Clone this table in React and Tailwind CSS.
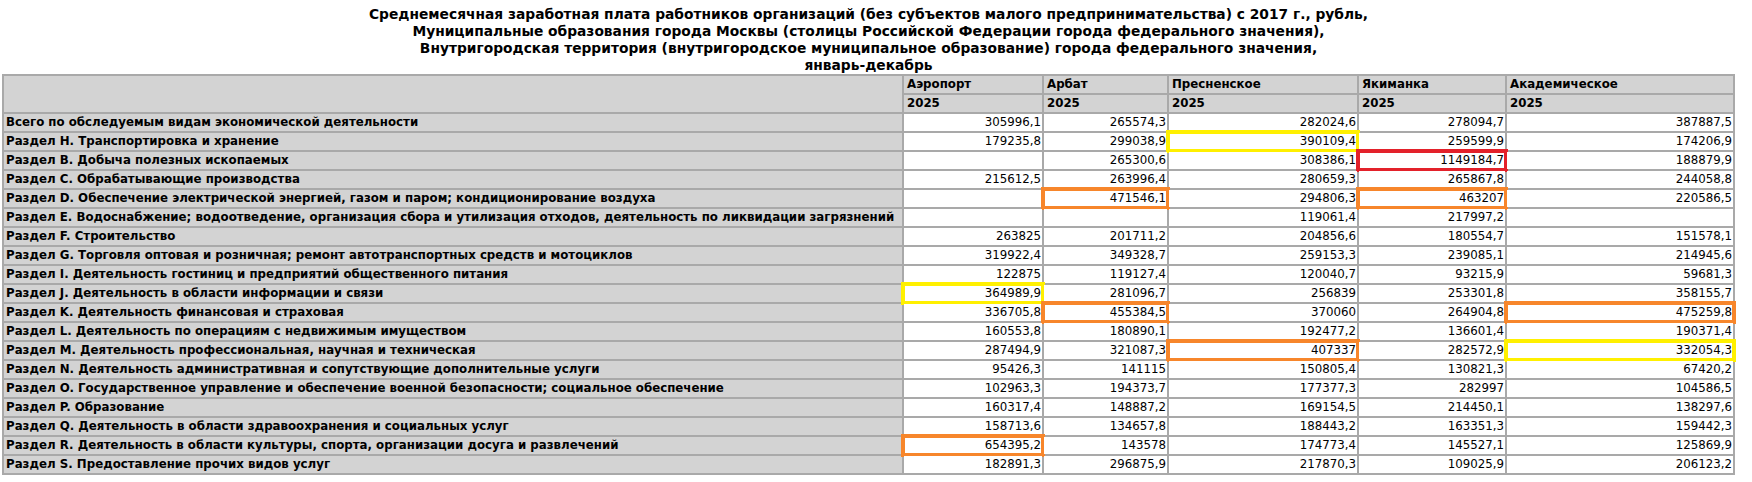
import React from "react";

const districts = ["Аэропорт", "Арбат", "Пресненское", "Якиманка", "Академическое"];

// marks: { columnIndex: colour }
const rows = [
  ["Всего по обследуемым видам экономической деятельности", ["305996,1", "265574,3", "282024,6", "278094,7", "387887,5"]],
  ["Раздел H. Транспортировка и хранение", ["179235,8", "299038,9", "390109,4", "259599,9", "174206,9"], { 2: "yellow" }],
  ["Раздел B. Добыча полезных ископаемых", ["", "265300,6", "308386,1", "1149184,7", "188879,9"], { 3: "red" }],
  ["Раздел C. Обрабатывающие производства", ["215612,5", "263996,4", "280659,3", "265867,8", "244058,8"]],
  ["Раздел D. Обеспечение электрической энергией, газом и паром; кондиционирование воздуха", ["", "471546,1", "294806,3", "463207", "220586,5"], { 1: "orange", 3: "orange" }],
  ["Раздел E. Водоснабжение; водоотведение, организация сбора и утилизация отходов, деятельность по ликвидации загрязнений", ["", "", "119061,4", "217997,2", ""]],
  ["Раздел F. Строительство", ["263825", "201711,2", "204856,6", "180554,7", "151578,1"]],
  ["Раздел G. Торговля оптовая и розничная; ремонт автотранспортных средств и мотоциклов", ["319922,4", "349328,7", "259153,3", "239085,1", "214945,6"]],
  ["Раздел I. Деятельность гостиниц и предприятий общественного питания", ["122875", "119127,4", "120040,7", "93215,9", "59681,3"]],
  ["Раздел J. Деятельность в области информации и связи", ["364989,9", "281096,7", "256839", "253301,8", "358155,7"], { 0: "yellow" }],
  ["Раздел K. Деятельность финансовая и страховая", ["336705,8", "455384,5", "370060", "264904,8", "475259,8"], { 1: "orange", 4: "orange" }],
  ["Раздел L. Деятельность по операциям с недвижимым имуществом", ["160553,8", "180890,1", "192477,2", "136601,4", "190371,4"]],
  ["Раздел M. Деятельность профессиональная, научная и техническая", ["287494,9", "321087,3", "407337", "282572,9", "332054,3"], { 2: "orange", 4: "yellow" }],
  ["Раздел N. Деятельность административная и сопутствующие дополнительные услуги", ["95426,3", "141115", "150805,4", "130821,3", "67420,2"]],
  ["Раздел O. Государственное управление и обеспечение военной безопасности; социальное обеспечение", ["102963,3", "194373,7", "177377,3", "282997", "104586,5"]],
  ["Раздел P. Образование", ["160317,4", "148887,2", "169154,5", "214450,1", "138297,6"]],
  ["Раздел Q. Деятельность в области здравоохранения и социальных услуг", ["158713,6", "134657,8", "188443,2", "163351,3", "159442,3"]],
  ["Раздел R. Деятельность в области культуры, спорта, организации досуга и развлечений", ["654395,2", "143578", "174773,4", "145527,1", "125869,9"], { 0: "orange" }],
  ["Раздел S. Предоставление прочих видов услуг", ["182891,3", "296875,9", "217870,3", "109025,9", "206123,2"]],
];

const markColors = {
  yellow: "border-[#fff000]",
  orange: "border-[#f7862b]",
  red: "border-[#e3212a]",
};

const cell = "h-[17px] p-0 leading-[17px] whitespace-nowrap overflow-hidden";

const App = () => {
  return (
    <div className="bg-white min-h-screen pl-[2px] font-['DejaVu_Sans',sans-serif] text-black">
      <div className="w-[1733px]">
        <div className="pt-[6px] text-center text-[13.8px] font-bold leading-[17px]">
          <div>Среднемесячная заработная плата работников организаций (без субъектов малого предпринимательства) с 2017 г., рубль,</div>
          <div>Муниципальные образования города Москвы (столицы Российской Федерации города федерального значения),</div>
          <div>Внутригородская территория (внутригородское муниципальное образование) города федерального значения,</div>
          <div>январь-декабрь</div>
        </div>
        <table className="table-fixed w-[1733px] border-separate border-spacing-[2px] bg-[#a9a9a9] text-[11.8px]">
          <colgroup>
            <col className="w-[898px]" />
            <col className="w-[138px]" />
            <col className="w-[123px]" />
            <col className="w-[188px]" />
            <col className="w-[146px]" />
            <col className="w-[226px]" />
          </colgroup>
          <thead>
            <tr>
              <th rowSpan={2} className="bg-[#d3d3d3] p-0"></th>
              {districts.map((d) => (
                <th key={d} className={`${cell} bg-[#d3d3d3] px-[3px] text-left font-bold`}>
                  {d}
                </th>
              ))}
            </tr>
            <tr>
              {districts.map((d) => (
                <th key={d} className={`${cell} bg-[#d3d3d3] px-[3px] text-left font-bold`}>
                  2025
                </th>
              ))}
            </tr>
          </thead>
          <tbody>
            {rows.map(([label, values, marks = {}]) => (
              <tr key={label}>
                <td className={`${cell} bg-[#d3d3d3] px-[2px] font-bold`}>{label}</td>
                {values.map((v, i) => (
                  <td key={i} className={`${cell} relative overflow-visible bg-white pr-[1px] text-right`}>
                    {v}
                    {marks[i] && (
                      <span
                        className={`pointer-events-none absolute -inset-[3px] border-[4px] ${markColors[marks[i]]}`}
                      />
                    )}
                  </td>
                ))}
              </tr>
            ))}
          </tbody>
        </table>
      </div>
    </div>
  );
};

export default App;
